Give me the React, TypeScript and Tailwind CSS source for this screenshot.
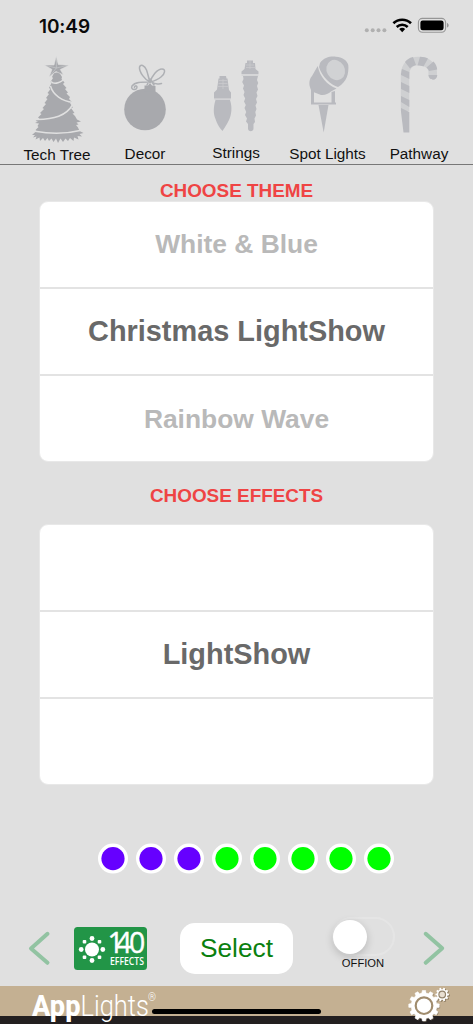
import React from "react";

const arial = "font-['Liberation_Sans',Arial,sans-serif]";

function StatusBar() {
  return (
    <div className="flex h-[50px] items-center justify-between pt-[2px] pr-[24px] pl-[39px]">
      <div className="font-['Inter',sans-serif] text-[19px] leading-none font-semibold tracking-[-0.1px] text-[#0a0a0a]">10:49</div>
      <svg width="86" height="24" viewBox="363 14 86 24">
        <g fill="#b0b0b0">
          <circle cx="366.8" cy="30.2" r="2" />
          <circle cx="372.7" cy="30.2" r="2" />
          <circle cx="378.5" cy="30.2" r="2" />
          <circle cx="384.4" cy="30.2" r="2" />
        </g>
        <g fill="none" stroke="#000" strokeWidth="2.6">
          <path d="M393.4 23.3a12.6 12.6 0 0 1 17.6 0" />
          <path d="M396.7 27a8 8 0 0 1 11 0" />
        </g>
        <path d="M402.2 32.2l-3-3.1a4.4 4.4 0 0 1 6 0z" fill="#000" />
        <rect x="418.4" y="18.4" width="27.2" height="13.8" rx="4" fill="none" stroke="#969696" strokeWidth="1.1" />
        <rect x="420.4" y="20.4" width="23.2" height="9.8" rx="2.3" fill="#000" />
        <path d="M447 23v4.6c1-.4 1.7-1.2 1.7-2.3s-.7-1.9-1.7-2.3z" fill="#969696" />
      </svg>
    </div>
  );
}

function TreeIcon() {
  return (
    <svg width="90" height="95" viewBox="12 50 90 95">
      <path
        fill="#a8a9ad"
        d="M54 73L52 77L53 78L50.500 82L51.500 83L49 88L50.500 89L47.500 93L49 94L46 98L47.500 99L44.500 103L46 104L42.500 108L44 109L40 113L41.500 114L38 117.500L39.500 118.500L35.500 121L38 121.500L35 123L39 123.500L37.500 126L38.500 127L35.500 130L36.500 131L32 135L35 135L33 137.500L36.500 136.500L35.500 139.500L39.500 137.500L40 141L43 138L45 141L47.500 138L49 141L51.500 138.500L53.500 142L56 138.500L58 143L60.500 138.500L63 142L65.500 138.500L68 141L70 138L73.500 141L74 137.500L78.500 139.500L77.500 136L82 136.500L79.500 134L83.500 133L79.500 131L78 127.500L76 125L78.500 124.500L76.500 122.500L81 121.500L77 119.500L75 116L72.500 113.500L74.500 113L71 108L73 107.500L70 103L72 102L69 99L70 97L66.500 93.500L68 92.500L65 89L66.500 88L63 84L64.500 82.500L61.500 79L62 77L59 72Z"
      />
      <g fill="none" stroke="#e0e0e0" strokeWidth="1.5">
        <path d="M51 81.500C54 85 62 83 65 77M50.500 86C53 95 62 101 73 102.500M72.500 105C66 116 54 119 37 119.500M35 131.300C50 134 66 134 80 130.500" />
      </g>
      <path fill="#a8a9ad" stroke="#e0e0e0" strokeWidth=".6" d="M56.200 56.300L58.300 64.500L69 65.200L60.300 69.500L63.500 75L56 71.500L49 77L52 69.500L44.500 65L54 65Z" />
      <path stroke="#cbccce" strokeWidth=".6" d="M56.500 59L56.300 68L50 76M56.300 68L68 65.300M56.300 68L46 65.500" fill="none" />
    </svg>
  );
}

function OrnamentIcon() {
  return (
    <svg width="86" height="95" viewBox="102 50 86 95">
      <circle cx="145" cy="109.500" r="20.800" fill="#a8a9ad" />
      <path d="M144.500 91V85.500L148 85.500L150 83L152 85.500L155.500 86V92z" fill="#a8a9ad" />
      <g fill="none" stroke="#aeb0b4" strokeWidth="1.500" strokeLinecap="round">
        <path d="M150 82c-5-2-11-10-10.500-15 1-3 5-2 7 3 1.500 4 2 8 3.500 12z" />
        <path d="M150 82c2-6 7-13 12-13 4 0 3 5-1 8-3 2.500-7 4-11 5z" />
        <path d="M149 82c-8 0-14 0-17 4-2 4 5 5 5 1 0-2-3-1-2.500.5M152 82c3 3 6 2 9.500 1.500M147 85l3-6 4 6" />
      </g>
    </svg>
  );
}

function BulbsIcon() {
  return (
    <svg width="96" height="95" viewBox="188 50 96 95" fill="#b9babf">
      <path d="M219.500 76H226L226.500 78.500H227.500L229 90L231 92.500V98.500H214V92.500L217 89.500L218.500 78.500H219.500Z" />
      <path d="M215.500 100H230C232.500 107 231.500 115 229 120C227 124 224 129 222.500 131C220.500 129 217 124 215.500 119C213 113 213.500 107 215.500 100Z" />
      <path d="M247 60.500H253V63H255L255.500 69L258.500 71.500V74H241.500V71.500L244.500 69L245.500 63H247Z" />
      <path d="M243 76H258L257 80L258.200 83L257 86L258 89.500L256.500 92.500L257.500 96L256 99L257 102.500L255.500 105.500L256.500 109L255.300 112L256 115.500L254.500 118.500L255 122L253.500 124V128.500C253.500 132 248 132 248 128.500V124L246 121.500L247 118.500L245 115L246.200 112L244.500 108L245.800 105L244 101.500L245.200 98.500L243.500 95L244.500 92L243 88.500L244 85.500L242.200 82L243.500 79Z" />
      <path d="M214.500 99.200H230.500M241.500 75H258.500" stroke="#c7c8cb" strokeWidth=".8" />
      <path d="M219 80.500H227M218.500 83.500H227.500M218 86.500H228M246 65H254M246 67.500H255M223 79V89M250 61V69" stroke="#cbccce" strokeWidth=".7" />
    </svg>
  );
}

function SpotIcon() {
  return (
    <svg width="87" height="95" viewBox="284 50 87 95">
      <path fill="#b9babf" d="M320 63C324 57.500 330 56 336 56.700C342 57 347 60 348.300 65C349 73 347 82 338 87C331 85 322 77 319 67Z" />
      <path fill="#b9babf" d="M317.700 66C320 77 327 85 336.500 88.500L331 91.500C328 94 325 95.500 321 95L312 91.500C308.500 86 308.500 80 312 76Z" />
      <ellipse cx="335.700" cy="70" rx="9" ry="10.500" transform="rotate(-30 335.700 70)" fill="#d1d2d4" />
      <path fill="#b9babf" d="M311 89L314 92V102.500H331.500V92L335 91V102.500H336V104.500H311Z" />
      <path fill="#b9babf" d="M318.500 105L328.500 105L323.700 132.500Z" />
    </svg>
  );
}

function CaneIcon() {
  return (
    <svg width="96" height="95" viewBox="371 50 96 95" fill="none">
      <path d="M405 111V75C405 66 411 61 418.500 61C427 61 432.700 66 432.700 72V75.500" stroke="#cfd0d2" strokeWidth="8.500" />
      <path fill="#b9babf" d="M401 108L409.300 112V132.500H403.500L401 112ZM401 96L409.300 100V107L401 102ZM401 82L409.300 86V93L401 89ZM401 74L402 69L409.300 72V79L401 75ZM405 62C407 59.500 409 58 413 57L416 65C413 66 411 67 410 68.500ZM420 56.800C423 56.800 426 57.500 428 58.500L423.500 66.500C421.500 65.500 420 65.500 417.500 65.500ZM433.500 61.500C436 64 437 67 437.200 69.500L429 71C428.500 69.500 427.500 68.500 426.500 67.500ZM428.500 75H437.300C437.300 81.500 428.500 81 428.500 75Z" />
    </svg>
  );
}

const navItems = [
  { label: "Tech Tree", Icon: TreeIcon, shift: "pt-[2px]" },
  { label: "Decor", Icon: OrnamentIcon, shift: "pt-[1px]" },
  { label: "Strings", Icon: BulbsIcon, shift: "pt-0" },
  { label: "Spot Lights", Icon: SpotIcon, shift: "pt-[1px]" },
  { label: "Pathway", Icon: CaneIcon, shift: "pt-[1px]" },
];

const rowStyles = [
  "flex items-center justify-center border-b-2 border-[#e3e3e3] text-[26.400px] font-bold text-[#b9b9b9]",
  "flex items-center justify-center border-b-2 border-[#e3e3e3] text-[28.900px] font-bold text-[#696969]",
  "flex items-center justify-center pt-[3px] text-[26.400px] font-bold text-[#b9b9b9]",
];

function Picker({ items }: { items: string[] }) {
  return (
    <div className="mx-[39px] grid h-[261px] shrink-0 grid-rows-[87px_87px_85px] overflow-hidden rounded-[9px] border border-[#e8e8e8] bg-white">
      {items.map((t, i) => (
        <div key={i} className={rowStyles[i]}>
          {t}
        </div>
      ))}
    </div>
  );
}

const lights = ["#6600ff", "#6600ff", "#6600ff", "#00ff00", "#00ff00", "#00ff00", "#00ff00", "#00ff00"];

function EffectsBadge() {
  return (
    <svg className="overflow-visible" width="73" height="43" viewBox="0 0 73 43">
      <rect width="73" height="43" rx="3.500" fill="#229547" />
      <g fill="#fff">
        <circle cx="18" cy="22.500" r="7" />
        <circle cx="18" cy="11.500" r="2.400" />
        <circle cx="18" cy="33.500" r="2.400" />
        <circle cx="7.200" cy="22.500" r="2.400" />
        <circle cx="28.800" cy="22.500" r="2.400" />
        <rect x="8.700" y="13" width="3.600" height="3.600" rx="1" />
        <rect x="23.700" y="13" width="3.600" height="3.600" rx="1" />
        <rect x="8.700" y="28.400" width="3.600" height="3.600" rx="1" />
        <rect x="23.700" y="28.400" width="3.600" height="3.600" rx="1" />
        <text x="33.600 41.600 55" y="25.700" fontFamily="Open Sans, sans-serif" fontSize="28.500" fontWeight="500" stroke="#fff" strokeWidth=".4">140</text>
        <text x="36" y="37.600" fontFamily="Open Sans, sans-serif" fontSize="10.500" fontWeight="600" textLength="34" lengthAdjust="spacingAndGlyphs">EFFECTS</text>
      </g>
    </svg>
  );
}

function gearPath(cx: number, cy: number, outer: number, inner: number, teeth: number) {
  const step = (Math.PI * 2) / teeth;
  const pts: string[] = [];
  for (let i = 0; i < teeth; i++) {
    const a = i * step;
    [[-0.32, inner], [-0.2, outer], [0.2, outer], [0.32, inner]].forEach(([o, r]) => {
      pts.push(`${(cx + r * Math.cos(a + o * step)).toFixed(2)},${(cy + r * Math.sin(a + o * step)).toFixed(2)}`);
    });
  }
  return `M${pts.join("L")}Z`;
}

function Gears() {
  return (
    <svg width="44" height="38" viewBox="406 986 44 38">
      <path d={gearPath(424.9, 1006.6, 15.3, 12.8, 12)} fill="#7a6b55" opacity=".6" />
      <path d={gearPath(424, 1005.7, 15.3, 12.8, 12)} fill="#fff" stroke="#fff" strokeWidth=".6" strokeLinejoin="round" />
      <circle cx="424" cy="1005.700" r="8.300" fill="#fff" stroke="#a08c6e" strokeWidth="2.200" />
      <path d={gearPath(443.2, 995.3, 6.8, 5.4, 10)} fill="#8f7e64" />
      <path d={gearPath(442.2, 994.5, 6.8, 5.4, 10)} fill="#fff" />
      <circle cx="442.200" cy="994.500" r="3.300" fill="#e8dfd2" stroke="#92836c" strokeWidth="1.200" />
    </svg>
  );
}

export default function App() {
  return (
    <div className={`flex h-[1024px] w-[473px] flex-col overflow-hidden bg-[#e0e0e0] ${arial}`}>
      <StatusBar />
      <nav className="grid h-[115px] grid-cols-[90px_86px_96px_87px_96px] border-b border-[#777777] pl-[12px]">
        {navItems.map(({ label, Icon, shift }) => (
          <div key={label} className="flex flex-col items-center">
            <Icon />
            <div className={`text-[15.300px] leading-[16px] whitespace-nowrap text-[#111111] ${shift}`}>{label}</div>
          </div>
        ))}
      </nav>
      <h2 className="flex h-[36px] items-end justify-center text-[18.900px] leading-[20px] font-bold text-[#ef4444]">CHOOSE THEME</h2>
      <Picker items={["White & Blue", "Christmas LightShow", "Rainbow Wave"]} />
      <h2 className="flex h-[62px] items-center justify-center pt-[6px] text-[18.900px] leading-[20px] font-bold text-[#ef4444]">CHOOSE EFFECTS</h2>
      <Picker items={["", "LightShow", ""]} />
      <div className="mt-[58px] flex gap-[8px] pl-[98px]">
        {lights.map((c, i) => (
          <svg key={i} width="30" height="31" viewBox="0 0 30 31">
            <circle cx="15" cy="15.600" r="15" fill="#fff" />
            <circle cx="15" cy="15.600" r="11.600" fill={c} />
          </svg>
        ))}
      </div>
      <div className="mt-[39px] flex h-[70px] items-center">
        <svg className="ml-[26px]" width="26" height="40" viewBox="26 928 26 40" fill="none" stroke="#92c3a2" strokeWidth="4" strokeLinecap="round" strokeLinejoin="round">
          <path d="M47.500 933.800L31 948.500L47.500 962.800" />
        </svg>
        <div className="ml-[22px]">
          <EffectsBadge />
        </div>
        <button className="ml-[33px] h-[51px] w-[113px] rounded-[15px] bg-white text-[26.300px] leading-none text-[#0a800f]">Select</button>
        <div className="ml-[38px] flex h-[62px] w-[64px] flex-col items-center">
          <div className="flex h-[39px] w-[63px] items-center rounded-full border-2 border-[#e5e5e5]">
            <div className="-ml-px size-[34px] shrink-0 rounded-full bg-white shadow-[0_3px_8px_rgba(0,0,0,0.18)]" />
          </div>
          <div className="mt-px text-[11.200px] leading-[13px] text-[#111111]">OFFION</div>
        </div>
        <svg className="ml-[26px]" width="26" height="40" viewBox="421 928 26 40" fill="none" stroke="#92c3a2" strokeWidth="4" strokeLinecap="round" strokeLinejoin="round">
          <path d="M425.700 933.800L442.200 948.300L425.700 962.800" />
        </svg>
      </div>
      <footer className="relative mt-auto flex h-[38px] justify-between bg-[linear-gradient(#c4b092_30px,#231f20_30px)] pr-[23px] pl-[31px]">
        <svg className="overflow-visible" width="126" height="38" viewBox="31 986 126 38" fill="#fff" fontFamily="Roboto, sans-serif">
          <text x="32" y="1015.500" fontSize="29.500" fontWeight="800" textLength="48.500" lengthAdjust="spacingAndGlyphs">App</text>
          <text x="80.500" y="1015.500" fontSize="29.500" fontWeight="300" textLength="68.500" lengthAdjust="spacingAndGlyphs">Lights</text>
          <text x="148" y="1001" fontSize="10.500" fontWeight="300" textLength="8" lengthAdjust="spacingAndGlyphs">®</text>
        </svg>
        <Gears />
        <div className="absolute top-[23px] left-[152px] h-[5px] w-[169px] rounded-full bg-black" />
      </footer>
    </div>
  );
}
